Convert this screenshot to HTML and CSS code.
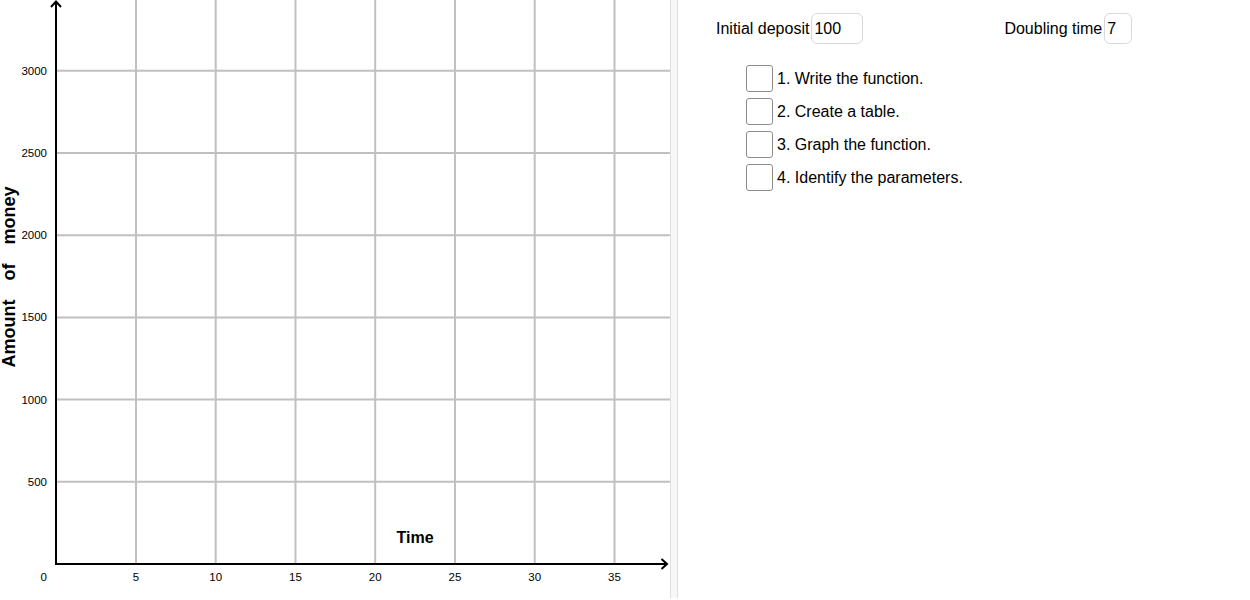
FILE: index.html
```html
<!DOCTYPE html>
<html lang="en">
<head>
<meta charset="utf-8">
<title>Exponential growth</title>
<link rel="stylesheet" href="styles.css">
</head>
<body>
<div class="app">
  <div class="graphics">
    <svg class="chart" width="670" height="598" viewBox="0 0 670 598" xmlns="http://www.w3.org/2000/svg">
      <g class="grid">
        <line x1="136" y1="0" x2="136" y2="564"/>
        <line x1="215.7" y1="0" x2="215.7" y2="564"/>
        <line x1="295.5" y1="0" x2="295.5" y2="564"/>
        <line x1="375.2" y1="0" x2="375.2" y2="564"/>
        <line x1="455" y1="0" x2="455" y2="564"/>
        <line x1="534.7" y1="0" x2="534.7" y2="564"/>
        <line x1="614.5" y1="0" x2="614.5" y2="564"/>
        <line x1="56" y1="481.8" x2="670" y2="481.8"/>
        <line x1="56" y1="399.6" x2="670" y2="399.6"/>
        <line x1="56" y1="317.4" x2="670" y2="317.4"/>
        <line x1="56" y1="235.2" x2="670" y2="235.2"/>
        <line x1="56" y1="153" x2="670" y2="153"/>
        <line x1="56" y1="70.8" x2="670" y2="70.8"/>
      </g>
      <g class="axes">
        <line x1="56" y1="565" x2="56" y2="1.5"/>
        <polyline points="51,7 56,1.5 61,7"/>
        <line x1="55" y1="564" x2="667" y2="564"/>
        <polyline points="661.5,559 667,564 661.5,569"/>
      </g>
      <g class="ylabels">
        <text x="47" y="74.8">3000</text>
        <text x="47" y="157">2500</text>
        <text x="47" y="239.2">2000</text>
        <text x="47" y="321.4">1500</text>
        <text x="47" y="403.6">1000</text>
        <text x="47" y="485.8">500</text>
        <text x="47" y="581">0</text>
      </g>
      <g class="xlabels">
        <text x="136" y="581">5</text>
        <text x="215.7" y="581">10</text>
        <text x="295.5" y="581">15</text>
        <text x="375.2" y="581">20</text>
        <text x="455" y="581">25</text>
        <text x="534.7" y="581">30</text>
        <text x="614.5" y="581">35</text>
      </g>
      <text class="axis-title" x="415" y="543">Time</text>
      <text class="axis-title ytitle" x="0" y="0" transform="translate(15 277) rotate(-90)">Amount of money</text>
    </svg>
  </div>
  <div class="divider"></div>
  <div class="panel">
    <div class="inputs">
      <label class="field"><span>Initial deposit</span><span class="box box-wide">100</span></label>
      <label class="field"><span>Doubling time</span><span class="box box-narrow">7</span></label>
    </div>
    <ul class="checklist">
      <li class="item"><span class="check"></span><span>1. Write the function.</span></li>
      <li class="item"><span class="check"></span><span>2. Create a table.</span></li>
      <li class="item"><span class="check"></span><span>3. Graph the function.</span></li>
      <li class="item"><span class="check"></span><span>4. Identify the parameters.</span></li>
    </ul>
  </div>
</div>
</body>
</html>
```
FILE: styles.css
```css
html, body {
  margin: 0;
  padding: 0;
  background: #ffffff;
  overflow: hidden;
}

body {
  font-family: "Liberation Sans", Arial, sans-serif;
  color: #000;
}

.app {
  display: flex;
  height: 598px;
}

.graphics {
  width: 670px;
  flex: none;
}

.chart {
  display: block;
}

.grid line {
  stroke: #c0c0c0;
  stroke-width: 2;
}

.axes line {
  stroke: #000;
  stroke-width: 2;
}

.axes polyline {
  fill: none;
  stroke: #000;
  stroke-width: 2;
  stroke-linejoin: miter;
}

.ylabels text {
  font-family: "Liberation Sans", Arial, sans-serif;
  font-size: 11.5px;
  text-anchor: end;
  fill: #000;
}

.xlabels text {
  font-family: "Liberation Sans", Arial, sans-serif;
  font-size: 11.5px;
  text-anchor: middle;
  fill: #000;
}

.axis-title {
  font-family: "Liberation Sans", Arial, sans-serif;
  font-weight: bold;
  font-size: 16px;
  text-anchor: middle;
  fill: #000;
}

.ytitle {
  font-size: 18px;
  word-spacing: 14px;
}

.divider {
  width: 6px;
  flex: none;
  background: #f7f7f7;
  border-left: 1px solid #e0e0e0;
  border-right: 1px solid #e0e0e0;
}

.panel {
  flex: 1;
  padding: 13px 0 0 38px;
  font-size: 16px;
}

.inputs {
  display: flex;
  align-items: center;
  gap: 141px;
}

.field {
  display: flex;
  align-items: center;
  gap: 2px;
}

.box {
  box-sizing: border-box;
  height: 31px;
  border: 1px solid #d8d8d8;
  border-radius: 6px;
  padding-left: 2px;
  display: flex;
  align-items: center;
}

.box-wide {
  width: 52px;
}

.box-narrow {
  width: 28px;
}

.checklist {
  list-style: none;
  margin: 21px 0 0 30px;
  padding: 0;
  display: flex;
  flex-direction: column;
  gap: 6px;
}

.item {
  display: flex;
  align-items: center;
  gap: 4px;
}

.check {
  box-sizing: border-box;
  width: 27px;
  height: 27px;
  border: 1px solid #8c8c8c;
  border-radius: 3px;
  background: #fff;
}
```
